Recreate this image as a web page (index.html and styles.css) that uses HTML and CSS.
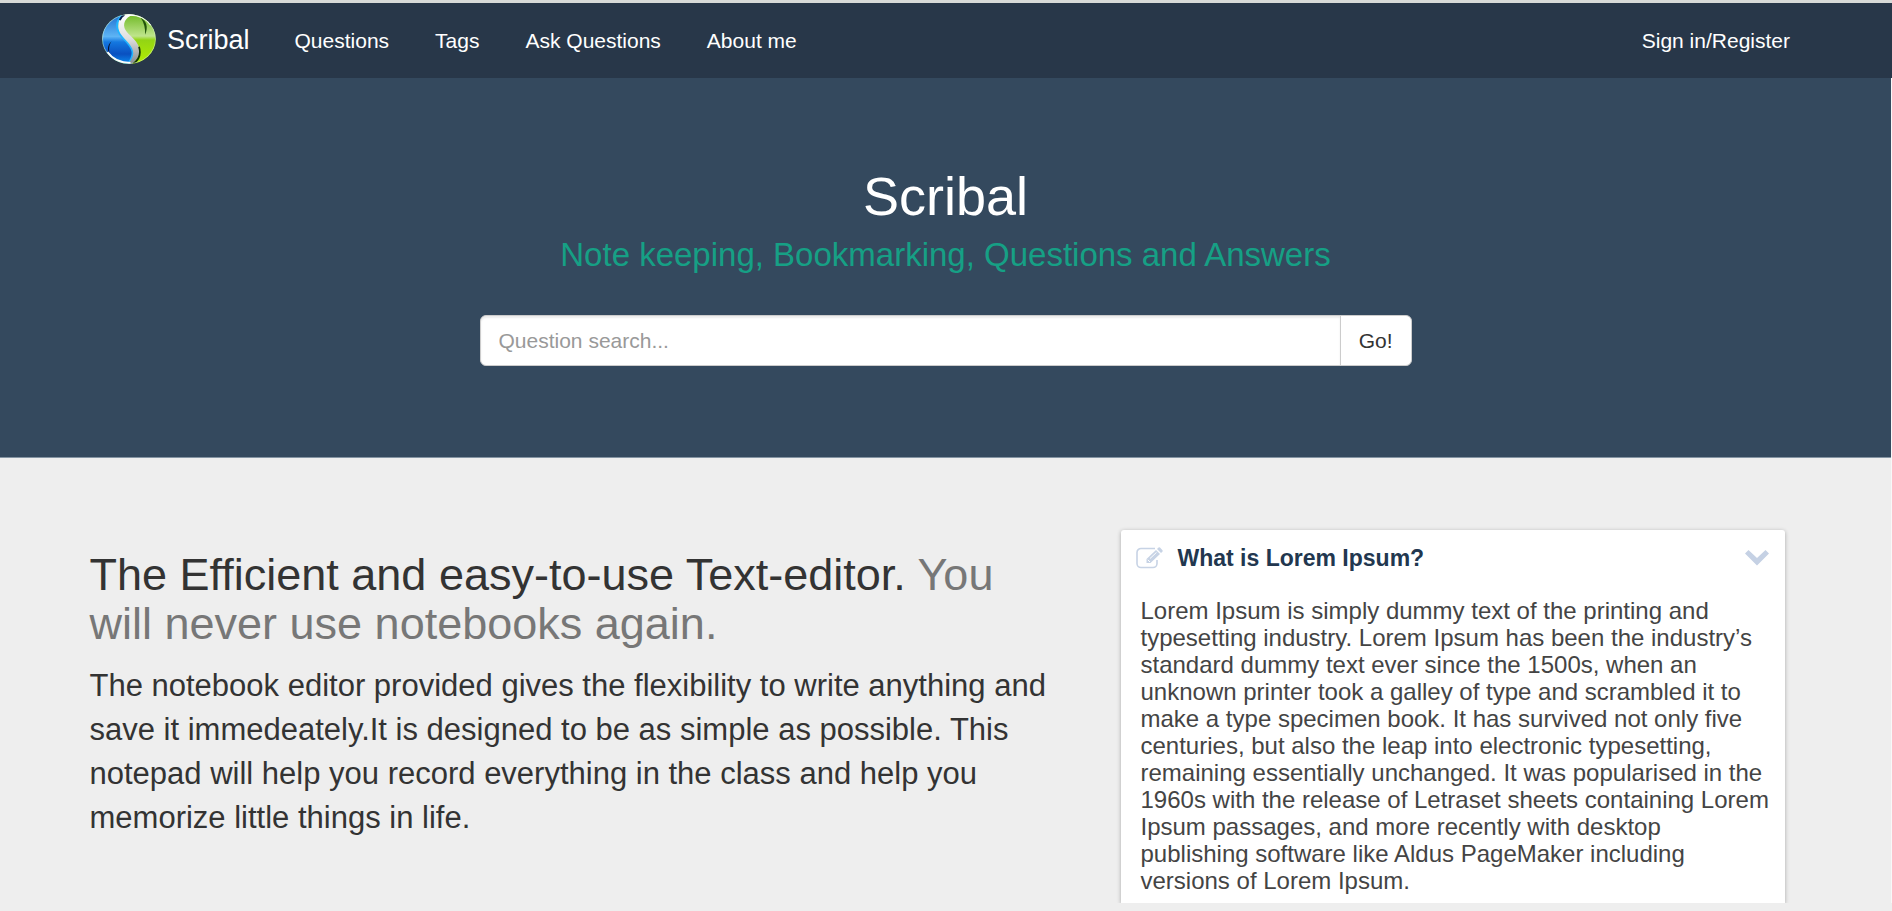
FILE: index.html
```html
<!DOCTYPE html>
<html lang="en">
<head>
<meta charset="utf-8">
<title>Scribal</title>
<link rel="stylesheet" href="styles.css">
</head>
<body>
<header class="navbar">
  <div class="container navbar-inner">
    <a class="brand" href="#">
      <svg class="brand-logo" viewBox="0 0 159 147" aria-hidden="true">
        <defs>
          <linearGradient id="blue" x1="0" y1="0" x2="0" y2="1">
            <stop offset="0" stop-color="#1d6fd0"/><stop offset=".45" stop-color="#5db4f5"/>
            <stop offset=".56" stop-color="#1478e0"/><stop offset=".8" stop-color="#0a50c0"/><stop offset="1" stop-color="#0b8cf0"/>
          </linearGradient>
          <linearGradient id="green" x1="0" y1="0" x2="0" y2="1">
            <stop offset="0" stop-color="#6fb824"/><stop offset=".44" stop-color="#bfe58c"/>
            <stop offset=".52" stop-color="#93d414"/><stop offset="1" stop-color="#b4ee00"/>
          </linearGradient>
          <linearGradient id="ribbon" x1="0" y1="0" x2="0" y2="1">
            <stop offset="0" stop-color="#ffffff"/><stop offset=".5" stop-color="#dedede"/><stop offset="1" stop-color="#85898d"/>
          </linearGradient>
          <clipPath id="ball"><ellipse cx="79.500" cy="73.500" rx="79" ry="73"/></clipPath>
        </defs>
        <g clip-path="url(#ball)">
          <rect width="159" height="147" fill="url(#green)"/>
          <path d="M0 0H60C40 22 42 48 62 68C86 92 104 106 88 147H0Z" fill="url(#blue)"/>
          <path d="M62 0C34 28 44 52 66 74C92 100 100 116 78 147" fill="none" stroke="#21b4ff" stroke-width="7"/>
          <path d="M64 0H104C82 2 65 15 65 34C66 54 88 64 101 82C118 106 112 128 88 147H76C98 124 96 106 78 85C62 67 48 56 48 36C48 20 53 9 64 0Z" fill="url(#ribbon)"/>
          <path d="M66 2C60 4 56 10 52 18" fill="none" stroke="#062250" stroke-width="6"/>
          <path d="M92 146C110 134 115 116 109 96" fill="none" stroke="#123306" stroke-width="5"/>
          <path d="M68 3C98 0 128 8 145 32" fill="none" stroke="#fff" stroke-width="6"/>
          <path d="M114 11C131 21 137 38 127 61C128 43 124 25 114 11Z" fill="#20520a"/>
          <path d="M28 80C20 92 19 108 24 120C14 108 16 90 28 80Z" fill="#06112e"/>
          <path d="M16 112C30 132 50 144 84 144" fill="none" stroke="#fff" stroke-width="6"/>
          <ellipse cx="79.500" cy="73.500" rx="78" ry="72" fill="none" stroke="#e6f4e0" stroke-opacity=".5" stroke-width="3"/>
        </g>
      </svg>
      <span>Scribal</span>
    </a>
    <nav class="nav-links">
      <a href="#">Questions</a>
      <a href="#">Tags</a>
      <a href="#">Ask Questions</a>
      <a href="#">About me</a>
    </nav>
    <a class="sign-in" href="#">Sign in/Register</a>
  </div>
</header>
<main class="page">
  <section class="hero">
    <h1 class="hero-title">Scribal</h1>
    <p class="hero-subtitle">Note keeping, Bookmarking, Questions and Answers</p>
    <form class="search">
      <input class="search-input" type="text" placeholder="Question search..." aria-label="Question search">
      <button class="search-button" type="button">Go!</button>
    </form>
  </section>
  <section class="container feature">
    <div class="feature-text">
      <h2 class="feature-heading">The Efficient and easy-to-use Text-editor. <span class="muted">You will never use notebooks again.</span></h2>
      <p class="lead">The notebook editor provided gives the flexibility to write anything and save it immedeately.It is designed to be as simple as possible. This notepad will help you record everything in the class and help you memorize little things in life.</p>
    </div>
    <div class="feature-media">
      <article class="note">
        <header class="note-header">
          <svg class="note-edit" viewBox="0 0 27 22" aria-hidden="true">
            <path d="M19 1.500H5A4 4 0 0 0 1 5.500V16.500A4 4 0 0 0 5 20.500H17A4 4 0 0 0 21 16.500V13" fill="none" stroke="#c7d3e5" stroke-width="1.600"/>
            <path d="M10.500 12L20 3L24 7L14.500 16H10.500Z M21 2L22.500 .6Q23.200 0 24 .6L26.500 3.200Q27 4 26.400 4.700L25 6Z" fill="#c7d3e5"/>
            <path d="M11.800 12.800L14 15M14 11.500L20.500 5.400" stroke="#fff" stroke-width="1"/>
          </svg>
          <h3 class="note-title">What is Lorem Ipsum?</h3>
          <svg class="note-chevron" viewBox="0 0 24 16" aria-hidden="true"><path d="M0 3.500L3.500 0L12 8L20.500 0L24 3.500L12 15.500Z" fill="#c5d1e4"/></svg>
        </header>
        <p class="note-body">Lorem Ipsum is simply dummy text of the printing and<br>typesetting industry. Lorem Ipsum has been the industry’s<br>standard dummy text ever since the 1500s, when an<br>unknown printer took a galley of type and scrambled it to<br>make a type specimen book. It has survived not only five<br>centuries, but also the leap into electronic typesetting,<br>remaining essentially unchanged. It was popularised in the<br>1960s with the release of Letraset sheets containing Lorem<br>Ipsum passages, and more recently with desktop<br>publishing software like Aldus PageMaker including<br>versions of Lorem Ipsum.</p>
      </article>
    </div>
  </section>
</main>
</body>
</html>
```
FILE: styles.css
```css
* {
  box-sizing: border-box;
}

body {
  margin: 0;
  background: #eee;
  color: #333;
  font-family: "Liberation Sans", Arial, sans-serif;
  font-size: 21px;
}

a {
  color: #fff;
  text-decoration: none;
}

h1,
h2,
h3,
p {
  margin: 0;
  font-weight: 400;
}

.container {
  max-width: 1756px;
  margin: 0 auto;
  padding: 0 22px;
}

.navbar {
  border-top: 3px solid #d8dad8;
  background: #283749;
}

.navbar-inner {
  display: flex;
  align-items: center;
  height: 75px;
  padding: 0 34px;
}

.brand {
  display: flex;
  align-items: center;
  gap: 11px;
  margin-right: 45px;
  font-size: 27px;
}

.brand-logo {
  width: 54px;
  height: 50px;
  margin-bottom: 4px;
}

.nav-links {
  display: flex;
  gap: 46px;
  flex: 1;
}

.page {
  border-right: 1px solid #f8f8f8;
}

.hero {
  display: flex;
  flex-direction: column;
  align-items: center;
  padding: 88px 22px 91px;
  border-bottom: 1px solid #8494a3;
  background: #34495e;
}

.hero-title {
  color: #fff;
  font-size: 54px;
  line-height: 60px;
}

.hero-subtitle {
  margin-top: 11px;
  color: #16a085;
  font-size: 33px;
  line-height: 36px;
}

.search {
  display: flex;
  width: 100%;
  max-width: 932px;
  height: 51px;
  margin-top: 42px;
}

.search-input,
.search-button {
  border: 1px solid #ccc;
  background: #fff;
  font: inherit;
}

.search-input {
  flex: 1;
  min-width: 0;
  padding: 0 18px;
  border-radius: 6px 0 0 6px;
  box-shadow: inset 0 2px 2px rgba(0, 0, 0, 0.08);
  color: #555;
}

.search-input::placeholder {
  color: #999;
}

.search-button {
  margin-left: -1px;
  padding: 0 18px;
  border-radius: 0 6px 6px 0;
  color: #333;
}

.feature {
  display: flex;
  justify-content: space-between;
  gap: 45px;
  padding-top: 65px;
}

.feature-text {
  flex: 1;
  max-width: 970px;
  padding-top: 27px;
}

.feature-heading {
  font-size: 45px;
  line-height: 49px;
}

.muted {
  color: #777;
}

.lead {
  margin-top: 16px;
  font-size: 31px;
  line-height: 44px;
}

.feature-media {
  padding: 7px 17px 0 6px;
  overflow: hidden;
}

.note {
  width: 664px;
  padding: 14px 12px 9px 15px;
  border-radius: 3px 3px 0 0;
  background: #fff;
  box-shadow: 0 1px 4px rgba(0, 0, 0, 0.3);
}

.note-header {
  display: flex;
  align-items: center;
  gap: 15px;
  padding-right: 4px;
}

.note-edit {
  width: 27px;
  height: 22px;
}

.note-title {
  flex: 1;
  color: #22374f;
  font-size: 23px;
  font-weight: 700;
  line-height: 28px;
}

.note-chevron {
  width: 24px;
  height: 16px;
}

.note-body {
  padding: 25px 0 0 5px;
  color: #444;
  font-size: 24px;
  line-height: 27px;
}
```
